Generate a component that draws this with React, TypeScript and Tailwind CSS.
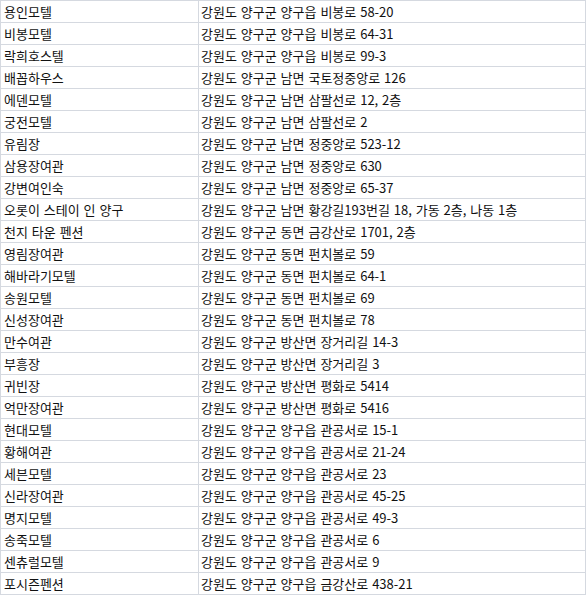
const rows: [string, string][] = [
  ['용인모텔', '강원도 양구군 양구읍 비봉로 58-20'],
  ['비봉모텔', '강원도 양구군 양구읍 비봉로 64-31'],
  ['락희호스텔', '강원도 양구군 양구읍 비봉로 99-3'],
  ['배꼽하우스', '강원도 양구군 남면 국토정중앙로 126'],
  ['에덴모텔', '강원도 양구군 남면 삼팔선로 12, 2층'],
  ['궁전모텔', '강원도 양구군 남면 삼팔선로 2'],
  ['유림장', '강원도 양구군 남면 정중앙로 523-12'],
  ['삼용장여관', '강원도 양구군 남면 정중앙로 630'],
  ['강변여인숙', '강원도 양구군 남면 정중앙로 65-37'],
  ['오롯이 스테이 인 양구', '강원도 양구군 남면 황강길193번길 18, 가동 2층, 나동 1층'],
  ['천지 타운 펜션', '강원도 양구군 동면 금강산로 1701, 2층'],
  ['영림장여관', '강원도 양구군 동면 펀치볼로 59'],
  ['해바라기모텔', '강원도 양구군 동면 펀치볼로 64-1'],
  ['송원모텔', '강원도 양구군 동면 펀치볼로 69'],
  ['신성장여관', '강원도 양구군 동면 펀치볼로 78'],
  ['만수여관', '강원도 양구군 방산면 장거리길 14-3'],
  ['부흥장', '강원도 양구군 방산면 장거리길 3'],
  ['귀빈장', '강원도 양구군 방산면 평화로 5414'],
  ['억만장여관', '강원도 양구군 방산면 평화로 5416'],
  ['현대모텔', '강원도 양구군 양구읍 관공서로 15-1'],
  ['황해여관', '강원도 양구군 양구읍 관공서로 21-24'],
  ['세븐모텔', '강원도 양구군 양구읍 관공서로 23'],
  ['신라장여관', '강원도 양구군 양구읍 관공서로 45-25'],
  ['명지모텔', '강원도 양구군 양구읍 관공서로 49-3'],
  ['송죽모텔', '강원도 양구군 양구읍 관공서로 6'],
  ['센츄럴모텔', '강원도 양구군 양구읍 관공서로 9'],
  ['포시즌펜션', '강원도 양구군 양구읍 금강산로 438-21'],
]

export default function App() {
  return (
    <div className="w-[586px] h-[595px] overflow-hidden bg-white">
      <table
        className="w-[586px] border-collapse text-[13px] text-[#111] [word-spacing:1px]"
        style={{ fontFamily: '"Noto Sans CJK KR", "Noto Sans", sans-serif' }}
      >
        <tbody>
          {rows.map(([name, addr]) => (
            <tr key={name} className="h-[22px]">
              <td className="w-[198px] border border-[#d5d9e0] pl-[3px] py-0 leading-[21px] whitespace-nowrap">{name}</td>
              <td className="border border-[#d5d9e0] pl-[2px] py-0 leading-[21px] whitespace-nowrap">{addr}</td>
            </tr>
          ))}
        </tbody>
      </table>
    </div>
  )
}
